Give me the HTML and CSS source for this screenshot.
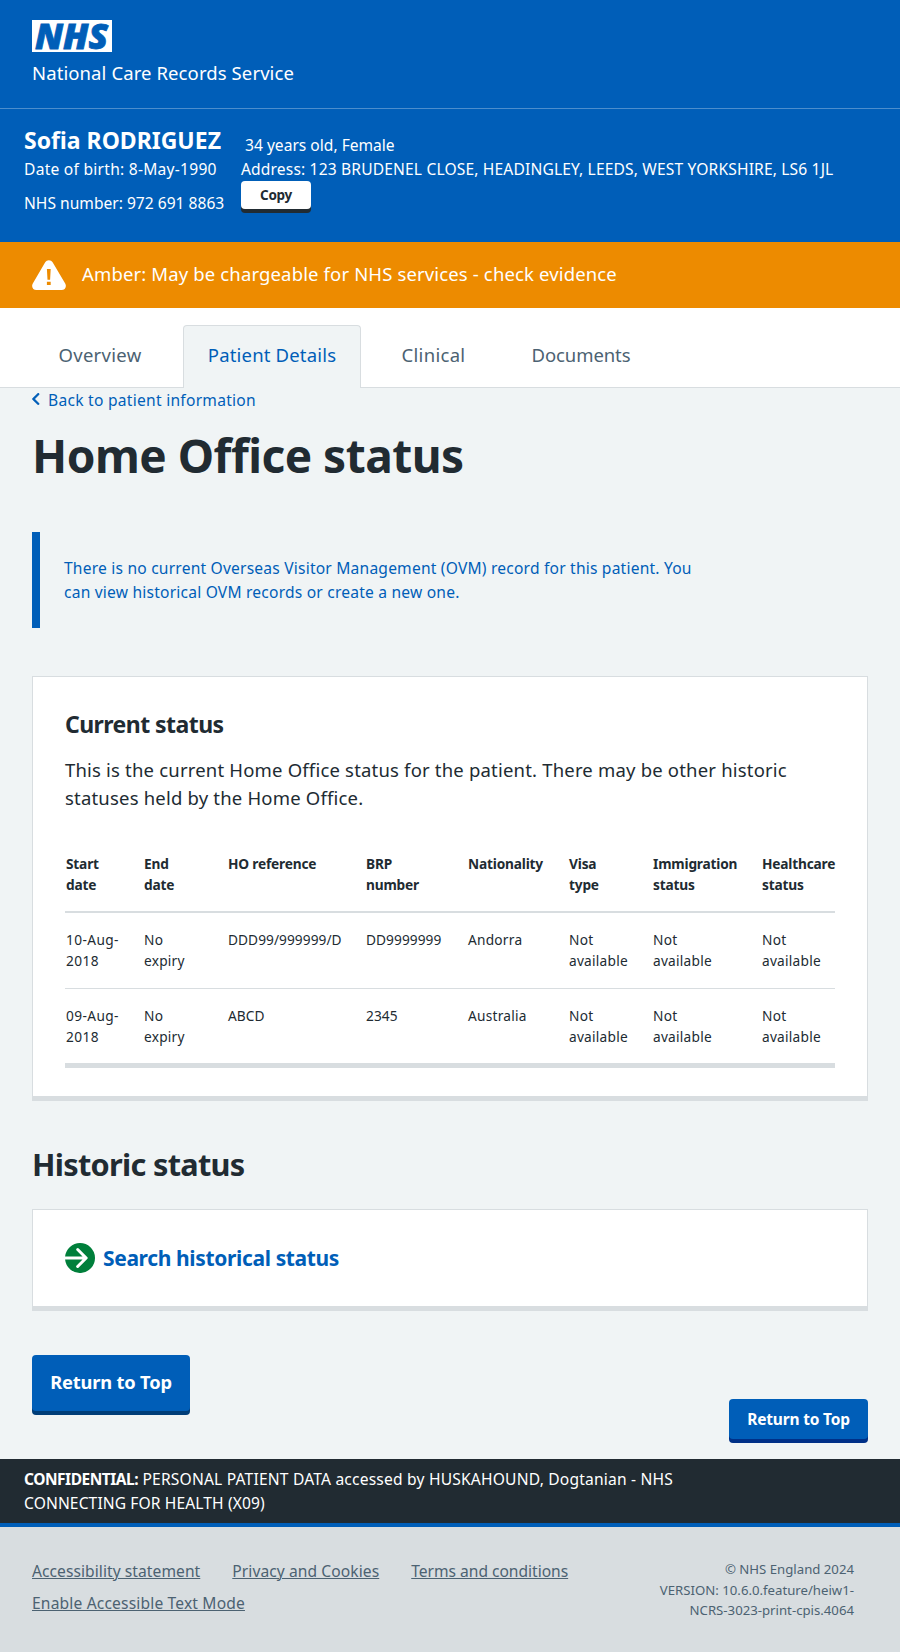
FILE: index.html
```html
<!DOCTYPE html>
<html lang="en">
<head>
<meta charset="utf-8">
<title>Home Office status</title>
<link rel="stylesheet" href="styles.css">
</head>
<body>
<header class="header">
  <svg class="logo" width="80" height="32" viewBox="0 0 80 32" role="img" aria-label="NHS"><rect width="80" height="32" fill="#fff"/><text class="logo-text" x="3" y="28.500" textLength="73" lengthAdjust="spacingAndGlyphs">NHS</text></svg>
  <div class="service">National Care Records Service</div>
</header>
<section class="patient">
  <div class="patient-row patient-top">
    <div class="patient-cell name">Sofia RODRIGUEZ</div>
    <div class="age">34 years old, Female</div>
  </div>
  <div class="patient-row">
    <div class="patient-cell dob">Date of birth: 8-May-1990</div>
    <div class="address">Address: 123 BRUDENEL CLOSE, HEADINGLEY, LEEDS, WEST YORKSHIRE, LS6 1JL</div>
  </div>
  <div class="patient-row">
    <div class="patient-cell nhs-number">NHS number: 972 691 8863</div>
    <button class="copy">Copy</button>
  </div>
</section>
<div class="amber">
  <svg width="34" height="30" viewBox="0 0 34 30"><path d="M13.2 2.3a4.3 4.3 0 0 1 7.4 0l12.6 21.2C35 26.600 33 30 29.600 30H4.400C1 30-1 26.600.8 23.500z" fill="#fff"/><path d="M14.900 9h3.800l-.6 10.700h-2.600zM14.900 21.700h3.800V25h-3.800z" fill="#ed8b00"/></svg>
  <span>Amber: May be chargeable for NHS services - check evidence</span>
</div>
<nav class="tabs">
  <a class="tab tab-overview">Overview</a>
  <a class="tab tab-details">Patient Details</a>
  <a class="tab tab-clinical">Clinical</a>
  <a class="tab tab-documents">Documents</a>
</nav>
<main class="main">
  <a class="back"><svg width="8" height="12" viewBox="8.200 5.900 8 12.200"><path d="M8.500 12c0-.3.1-.5.3-.7l5-5c.4-.4 1-.4 1.400 0s.4 1 0 1.400L10.900 12l4.300 4.300c.4.4.4 1 0 1.400s-1 .4-1.400 0l-5-5c-.2-.2-.3-.4-.3-.7z" fill="#005eb8" stroke="#005eb8" stroke-width=".4"/></svg><span>Back to patient information</span></a>
  <h1 class="title">Home Office status</h1>
  <div class="inset">There is no current Overseas Visitor Management (OVM) record for this patient. You can view historical OVM records or create a new one.</div>
  <section class="card status-card">
    <h2 class="card-title">Current status</h2>
    <p class="card-text">This is the current Home Office status for the patient. There may be other historic statuses held by the Home Office.</p>
    <table class="table">
      <colgroup><col class="c-start"><col class="c-end"><col class="c-ref"><col class="c-brp"><col class="c-nat"><col class="c-visa"><col class="c-imm"><col class="c-health"></colgroup>
      <thead>
        <tr><th>Start<br>date</th><th>End<br>date</th><th>HO reference</th><th>BRP<br>number</th><th>Nationality</th><th>Visa<br>type</th><th>Immigration<br>status</th><th>Healthcare<br>status</th></tr>
      </thead>
      <tbody>
        <tr><td class="date">10-Aug-<br>2018</td><td>No<br>expiry</td><td class="code">DDD99/999999/D</td><td class="code">DD9999999</td><td>Andorra</td><td>Not<br>available</td><td>Not<br>available</td><td>Not<br>available</td></tr>
        <tr><td class="date">09-Aug-<br>2018</td><td>No<br>expiry</td><td class="code">ABCD</td><td class="code">2345</td><td>Australia</td><td>Not<br>available</td><td>Not<br>available</td><td>Not<br>available</td></tr>
      </tbody>
    </table>
  </section>
  <h2 class="section-title">Historic status</h2>
  <section class="card search-card">
    <a class="action"><svg width="30" height="30" viewBox="2 2 20 20"><path d="M12 2a10 10 0 0 0-9.950 9h11.640L9.740 7.050a1 1 0 0 1 1.410-1.410l5.660 5.650a1 1 0 0 1 0 1.420l-5.660 5.650a1 1 0 0 1-1.410 0 1 1 0 0 1 0-1.410L13.690 13H2.050A10 10 0 1 0 12 2z" fill="#007f3b"/></svg><span>Search historical status</span></a>
  </section>
  <div class="buttons">
    <button class="button">Return to Top</button>
    <button class="button button-small">Return to Top</button>
  </div>
</main>
<div class="confidential"><p class="confidential-text"><strong>CONFIDENTIAL:</strong> PERSONAL PATIENT DATA accessed by HUSKAHOUND, Dogtanian - NHS <span class="org">CONNECTING FOR HEALTH (X09)</span></p></div>
<footer class="footer">
  <div class="links">
    <a class="link link-access">Accessibility statement</a>
    <a class="link link-privacy">Privacy and Cookies</a>
    <a class="link link-terms">Terms and conditions</a>
    <a class="link">Enable Accessible Text Mode</a>
  </div>
  <div class="version">© NHS England 2024<br>VERSION: 10.6.0.feature/heiw1-<br>NCRS-3023-print-cpis.4064</div>
</footer>
</body>
</html>
```
FILE: styles.css
```css
* { box-sizing: border-box; }
body {
  margin: 0;
  font-family: "Noto Sans", "Open Sans", sans-serif;
  font-size: 15.6px;
  line-height: 24px;
  color: #212b32;
  background: #f0f4f5;
}
h1, h2, p { margin: 0; font-weight: 700; }
p { font-weight: 400; }
button { font-family: inherit; border: 0; padding: 0; font-weight: 700; }
svg { display: block; flex: none; }

.header {
  height: 109px;
  padding: 20px 32px 0;
  background: #005eb8;
  border-bottom: 1px solid #4c8ecd;
  color: #fff;
}
.logo { overflow: visible; }
.logo-text {
  font-family: "Noto Sans", "Open Sans", sans-serif;
  font-size: 36px;
  font-style: italic;
  font-weight: 900;
  fill: #005eb8;
  stroke: #005eb8;
  stroke-width: 0.8;
}
.service { margin-top: 7px; font-size: 18.5px; line-height: 28px; letter-spacing: 0.1px; }

.patient { height: 133px; padding: 15px 24px 0; background: #005eb8; color: #fff; }
.patient-row { display: flex; align-items: flex-start; white-space: nowrap; }
.patient-top { align-items: flex-end; height: 33px; }
.patient-cell { flex: none; width: 217px; }
.name { padding-bottom: 1px; font-size: 23px; line-height: 32px; font-weight: 700; }
.age { padding-left: 4px; }
.dob { letter-spacing: 0.25px; }
.address { letter-spacing: 0.15px; }
.nhs-number { margin-top: 10px; }
.copy {
  width: 70px;
  height: 28px;
  border-radius: 4px;
  background: #fff;
  box-shadow: 0 4px 0 #212b32;
  color: #212b32;
  font-size: 13.5px;
  line-height: 28px;
  letter-spacing: -0.3px;
}

.amber {
  display: flex;
  align-items: center;
  gap: 16px;
  height: 66px;
  padding: 0 32px;
  background: #ed8b00;
  color: #fff;
  font-size: 18.5px;
  line-height: 28px;
  letter-spacing: 0.14px;
}
.amber span { padding-bottom: 2px; }

.tabs {
  display: flex;
  gap: 16px;
  height: 80px;
  padding: 17px 33px 0;
  background: #fff;
  border-bottom: 1px solid #d8dde0;
}
.tab {
  flex: none;
  height: 63px;
  padding-top: 15px;
  border: 1px solid transparent;
  border-bottom: 0;
  border-radius: 4px 4px 0 0;
  color: #4c6272;
  font-size: 18.5px;
  line-height: 28px;
  letter-spacing: 0.3px;
  text-align: center;
}
.tab-overview { width: 134px; }
.tab-details { width: 178px; background: #f0f4f5; border-color: #d8dde0; color: #005eb8; letter-spacing: 0.17px; }
.tab-clinical { width: 113px; }
.tab-documents { width: 150px; letter-spacing: -0.08px; }

.main { padding: 0 32px; }
.back { display: flex; gap: 8px; color: #005eb8; letter-spacing: 0.26px; }
.back svg { margin-top: 5px; }
.title { margin-top: 15px; font-size: 46px; line-height: 56px; letter-spacing: -0.5px; }
.inset {
  width: 680px;
  margin-top: 49px;
  padding: 24px 16px 24px 24px;
  border-left: 8px solid #005eb8;
  color: #005eb8;
  letter-spacing: 0.2px;
}

.card { background: #fff; border: 1px solid #d8dde0; border-bottom-width: 5px; }
.status-card { margin-top: 48px; padding: 31px 32px 28px; }
.card-title { font-size: 23px; line-height: 32px; letter-spacing: -0.55px; }
.card-text { margin-top: 16px; font-size: 18.5px; line-height: 28px; letter-spacing: 0.188px; }

.table {
  table-layout: fixed;
  width: 770px;
  margin-top: 41px;
  border-collapse: separate;
  border-spacing: 0;
  font-size: 13.7px;
  line-height: 21px;
}
.c-start { width: 78px; }
.c-end { width: 84px; }
.c-ref { width: 138px; }
.c-brp { width: 102px; }
.c-nat { width: 101px; }
.c-visa { width: 84px; }
.c-imm { width: 109px; }
.c-health { width: 74px; }
.table th, .table td { padding: 16px 0 17px 1px; text-align: left; vertical-align: top; white-space: nowrap; }
.table th { padding: 0 0 16px 1px; border-bottom: 2px solid #d8dde0; font-weight: 700; letter-spacing: -0.18px; }
.table td { border-bottom: 1px solid #d8dde0; letter-spacing: 0.24px; }
.table tbody tr:last-child td { padding-bottom: 16px; border-bottom-width: 5px; }
.table td.date { letter-spacing: 0.4px; }
.table td.code { letter-spacing: 0.06px; }

.section-title { margin-top: 43px; font-size: 30.7px; line-height: 40px; letter-spacing: -0.7px; }
.search-card { margin-top: 25px; padding: 32px; }
.action { display: flex; align-items: center; gap: 8px; color: #005eb8; font-size: 21px; line-height: 32px; font-weight: 700; letter-spacing: -0.36px; }

.buttons { display: flex; justify-content: space-between; align-items: flex-start; height: 148px; padding-top: 44px; }
.button {
  width: 158px;
  height: 56px;
  padding-bottom: 2px;
  border-radius: 4px;
  background: #005eb8;
  box-shadow: 0 4px 0 #003d78;
  color: #fff;
  font-size: 18.3px;
  line-height: 28px;
  letter-spacing: -0.17px;
}
.button-small { width: 139px; height: 40px; padding-bottom: 0; margin-top: 44px; box-shadow: 0 4px 0 #003087; font-size: 15.5px; line-height: 24px; letter-spacing: -0.19px; }

.confidential { padding: 8px 24px; background: #212b32; color: #fff; }
.confidential-text { width: 664px; letter-spacing: 0.19px; }
.confidential strong { font-size: 15.5px; font-weight: 700; letter-spacing: -0.48px; }
.org { letter-spacing: 0.11px; }

.footer {
  display: flex;
  justify-content: space-between;
  height: 129px;
  padding: 32px 46px 0 32px;
  border-top: 4px solid #005eb8;
  background: #d8dde0;
  color: #4c6272;
}
.links { display: flex; flex-wrap: wrap; align-content: flex-start; gap: 8px 32px; width: 600px; }
.link { text-decoration: underline; text-decoration-thickness: 1px; text-underline-offset: 1px; letter-spacing: 0.16px; }
.link-access { letter-spacing: 0.06px; }
.link-privacy { letter-spacing: 0.08px; }
.link-terms { letter-spacing: -0.02px; }
.version { font-size: 13.2px; line-height: 20.5px; text-align: right; white-space: nowrap; }
```
